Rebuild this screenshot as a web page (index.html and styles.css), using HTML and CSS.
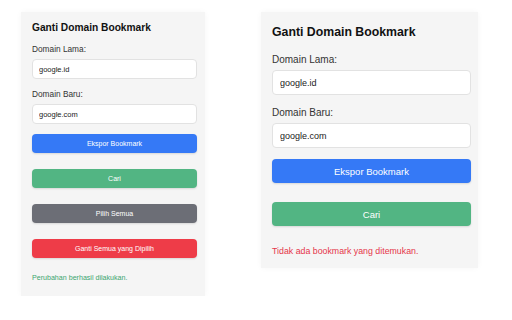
FILE: index.html
```html
<!DOCTYPE html>
<html lang="id">
<head>
    <meta charset="UTF-8">
    <meta name="viewport" content="width=device-width, initial-scale=1.0">
    <title>Ganti Domain Bookmark</title>
    <link rel="stylesheet" href="styles.css">
</head>
<body>
    <div class="popup small">
        <h1>Ganti Domain Bookmark</h1>
        <label for="old1">Domain Lama:</label>
        <input type="text" id="old1" value="google.id">
        <label for="new1">Domain Baru:</label>
        <input type="text" id="new1" value="google.com">
        <button class="btn blue">Ekspor Bookmark</button>
        <button class="btn green">Cari</button>
        <button class="btn gray">Pilih Semua</button>
        <button class="btn red">Ganti Semua yang Dipilih</button>
        <div class="status ok">Perubahan berhasil dilakukan.</div>
    </div>

    <div class="popup large">
        <h1>Ganti Domain Bookmark</h1>
        <label for="old2">Domain Lama:</label>
        <input type="text" id="old2" value="google.id">
        <label for="new2">Domain Baru:</label>
        <input type="text" id="new2" value="google.com">
        <button class="btn blue">Ekspor Bookmark</button>
        <button class="btn green">Cari</button>
        <div class="status err">Tidak ada bookmark yang ditemukan.</div>
    </div>
</body>
</html>
```

FILE: styles.css
```css
body {
    font-family: 'Liberation Sans', Arial, sans-serif;
    margin: 0;
    padding: 12px 0 0 21px;
    display: flex;
    align-items: flex-start;
    gap: 56px;
    background-color: #ffffff;
    color: #222;
}

.popup {
    background-color: #f5f5f5;
    box-shadow: 0 0 6px rgba(0, 0, 0, 0.04);
    box-sizing: border-box;
}

.popup h1 {
    margin: 0;
    font-weight: bold;
    color: #111;
}

.popup label {
    display: block;
    color: #333;
}

.popup input {
    display: block;
    width: 100%;
    box-sizing: border-box;
    margin: 0;
    border: 1px solid #e2e2e2;
    border-radius: 4px;
    background-color: #fff;
    font-family: inherit;
    color: #222;
}

.btn {
    display: block;
    width: 100%;
    border: none;
    border-radius: 4px;
    color: white;
    font-family: inherit;
    cursor: pointer;
    box-shadow: 0 1px 2px rgba(0, 0, 0, 0.12);
}

.blue { background-color: #3579f6; }
.green { background-color: #52b583; }
.gray { background-color: #6c6e76; }
.red { background-color: #ee3c48; }

.status.ok { color: #3ba56f; }
.status.err { color: #e5364a; }

/* smaller popup */
.small {
    width: 184px;
    padding: 9px 8px 13px 11px;
}

.small h1 {
    font-size: 10.2px;
    line-height: 14px;
    margin-bottom: 9px;
}

.small label {
    font-size: 8.3px;
    line-height: 11px;
    margin-bottom: 4px;
}

.small input {
    height: 20px;
    padding: 0 6px;
    font-size: 7.5px;
    margin-bottom: 10px;
}

.small .btn {
    height: 19px;
    font-size: 7px;
    margin-bottom: 16px;
}

.small .status {
    font-size: 7.1px;
    line-height: 9px;
    margin-top: 1px;
}

/* larger popup */
.large {
    width: 217px;
    padding: 12px 7px 11px 11px;
}

.large h1 {
    font-size: 12.3px;
    line-height: 17px;
    margin-bottom: 12px;
}

.large label {
    font-size: 10px;
    line-height: 13px;
    margin-bottom: 4px;
}

.large input {
    height: 25px;
    padding: 0 7px;
    font-size: 9px;
    margin-bottom: 11px;
}

.large .btn {
    height: 24px;
    font-size: 9.5px;
    margin-bottom: 19px;
}

.large .status {
    font-size: 8.8px;
    line-height: 12px;
    margin-top: 2px;
}
```
